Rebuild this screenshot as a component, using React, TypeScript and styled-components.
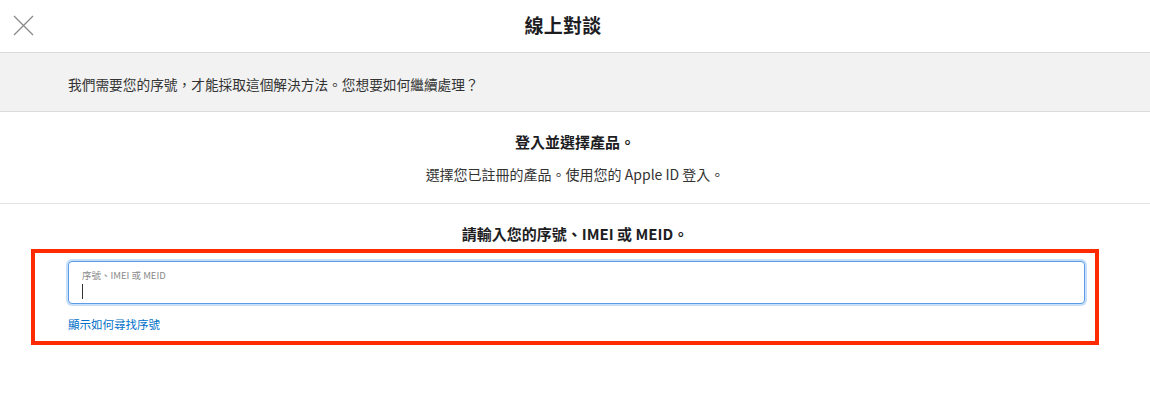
import styled, { createGlobalStyle } from 'styled-components';

const GlobalStyle = createGlobalStyle`
    html, body {
        margin: 0;
        padding: 0;
        background: #ffffff;
    }
    body {
        font-family: "Noto Sans CJK TC", "Noto Sans", "Liberation Sans", sans-serif;
        color: #333333;
    }
`;

const Page = styled.div`
    width: 1150px;
    height: 412px;
    background: #ffffff;
`;

const Header = styled.header`
    display: grid;
    grid-template-columns: 1fr auto 1fr;
    align-items: center;
    height: 52px;
    border-bottom: 1px solid #dcdcdc;
`;

const CloseButton = styled.button`
    justify-self: start;
    display: flex;
    align-items: center;
    justify-content: center;
    width: 22px;
    height: 22px;
    margin: 0 0 2px 12px;
    padding: 0;
    border: none;
    background: none;
    cursor: pointer;
`;

const Title = styled.h1`
    margin: 0 24px 2px 0;
    line-height: 24px;
    font-size: 19px;
    font-weight: 700;
    color: #1d1d1f;
    letter-spacing: 0.3px;
`;

const Notice = styled.div`
    display: flex;
    align-items: center;
    height: 59px;
    box-sizing: border-box;
    padding: 4px 0 0 68px;
    background: #f2f2f2;
    border-bottom: 1px solid #dcdcdc;
    font-size: 13.7px;
    color: #333333;
`;

const Section = styled.section<{ $divider?: boolean }>`
    display: flex;
    flex-direction: column;
    align-items: center;
    padding-top: 20px;
    border-bottom: ${(p) => (p.$divider ? '1px solid #e3e3e3' : 'none')};
`;

const Heading = styled.h2`
    margin: 0;
    line-height: 20px;
    font-size: 15px;
    font-weight: 700;
    color: #1d1d1f;
`;

const SubText = styled.p`
    margin: 12px 0 19px;
    line-height: 20px;
    font-size: 14px;
    color: #333333;
`;

const HighlightBox = styled.div`
    align-self: stretch;
    margin: 5px 51px 0 31px;
    padding: 8px 10px 9px 33px;
    border: 4px solid #ff2a00;
`;

const Field = styled.label`
    display: flex;
    flex-direction: column;
    height: 43px;
    box-sizing: border-box;
    padding: 7px 13px 0;
    border: 1px solid #5a9de6;
    border-radius: 4px;
    box-shadow: 0 0 0 2px #c7dff8;
    background: #ffffff;
`;

const FieldLabel = styled.span`
    font-size: 9.5px;
    line-height: 12px;
    color: #8a8a8a;
`;

const Caret = styled.span`
    width: 1px;
    height: 15px;
    margin-top: 3px;
    background: #333333;
`;

const HelpLink = styled.a`
    display: block;
    margin-top: 12px;
    line-height: 16px;
    font-size: 11.5px;
    color: #0070c9;
    text-decoration: none;
`;

function CloseIcon() {
    return (
        <svg width="21" height="21" viewBox="0 0 21 21">
            <path d="M1 1 L20 20 M20 1 L1 20" stroke="#8a8a8a" strokeWidth="1.3" fill="none" />
        </svg>
    );
}

export default function App() {
    return (
        <Page>
            <GlobalStyle />
            <Header>
                <CloseButton aria-label="關閉">
                    <CloseIcon />
                </CloseButton>
                <Title>線上對談</Title>
                <span />
            </Header>
            <Notice>我們需要您的序號，才能採取這個解決方法。您想要如何繼續處理？</Notice>
            <Section $divider>
                <Heading>登入並選擇產品。</Heading>
                <SubText>選擇您已註冊的產品。使用您的 Apple ID 登入。</SubText>
            </Section>
            <Section>
                <Heading>請輸入您的序號、IMEI 或 MEID。</Heading>
                <HighlightBox>
                    <Field>
                        <FieldLabel>序號、IMEI 或 MEID</FieldLabel>
                        <Caret />
                    </Field>
                    <HelpLink href="#">顯示如何尋找序號</HelpLink>
                </HighlightBox>
            </Section>
        </Page>
    );
}
